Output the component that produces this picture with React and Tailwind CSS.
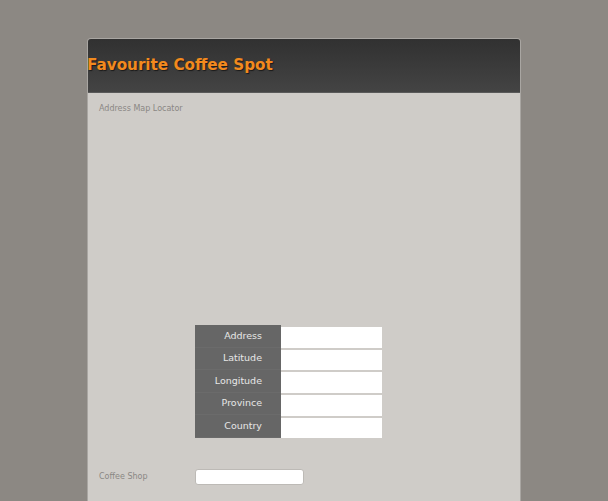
import React from 'react';

const fields = ['Address', 'Latitude', 'Longitude', 'Province', 'Country'];

const App = () => {
    return (
        <div className="min-h-[501px] bg-[#8c8883] pt-[38px] font-['DejaVu_Sans',sans-serif]">
            <div className="ml-[87px] w-[434px] rounded-t-[4px] border border-[#a9a6a2] border-b-0 overflow-hidden">
                <div className="h-[54px] bg-gradient-to-b from-[#313131] to-[#444444] flex items-center border-b border-[#5a5a5a]">
                    <h1 className="text-[15.2px] font-bold text-[#f28a1e] [text-shadow:1px_1px_1px_#1a1a1a] -ml-[1px]">
                        Favourite Coffee Spot
                    </h1>
                </div>
                <div className="bg-[#cfccc8] h-[410px] px-[11px] pt-[10px]">
                    <p className="text-[8px] text-[#8a8784]">Address Map Locator</p>

                    <div className="mt-[210px] ml-[96px] flex flex-col w-[187px]">
                        {fields.map((f) => (
                            <div key={f} className="flex h-[22.6px]">
                                <div className="w-[86px] bg-[#666666] text-[#e6e6e6] text-[9.5px] flex items-center justify-end pr-[19px] border-b border-[#6b6b6b]">
                                    {f}
                                </div>
                                <div className="flex-1 py-[1px]">
                                    <input className="w-full h-full bg-white outline-none border-0" />
                                </div>
                            </div>
                        ))}
                    </div>

                    <div className="mt-[31px] flex items-center">
                        <span className="w-[96px] text-[8px] text-[#8a8784]">Coffee Shop</span>
                        <input className="w-[109px] h-[16px] bg-white border border-[#bdbab6] rounded-[3px] outline-none" />
                    </div>
                </div>
            </div>
        </div>
    );
};

export default App;
